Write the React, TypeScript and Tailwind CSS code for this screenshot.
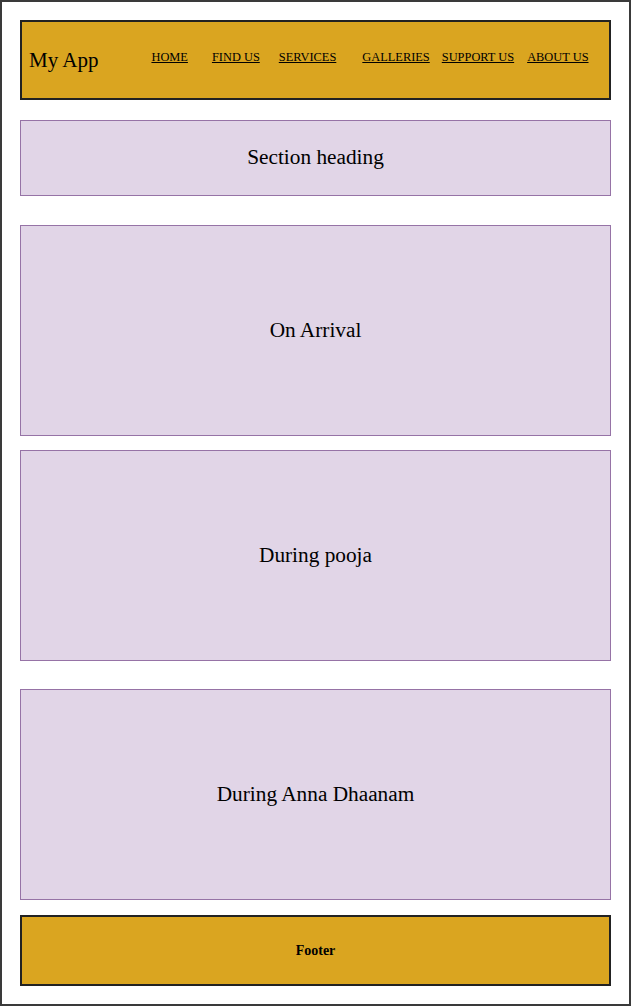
const serif = "font-['Liberation_Serif','Times_New_Roman',serif]";

function Box({ label, className }: { label: string; className: string }) {
  return (
    <div
      className={`flex items-center justify-center border border-[#9673a6] bg-[#e1d5e7] text-[21.3px] text-black ${className}`}
    >
      {label}
    </div>
  );
}

export default function App() {
  const links = [
    { name: "HOME", ml: "ml-0" },
    { name: "FIND US", ml: "ml-[24px]" },
    { name: "SERVICES", ml: "ml-[19px]" },
    { name: "GALLERIES", ml: "ml-[26px]" },
    { name: "SUPPORT US", ml: "ml-[12px]" },
    { name: "ABOUT US", ml: "ml-[13px]" },
  ];

  return (
    <div className={`${serif} h-[1006px] w-[631px] bg-white`}>
      <div className="flex h-full flex-col border-2 border-[#3a3a3a] px-[18px] pt-[18px]">
        {/* Header */}
        <header className="flex h-[80px] items-center border-2 border-[#222] bg-[#daa520] pl-[7px]">
          <span className="mt-[1px] text-[21px] text-black">My App</span>
          <nav className="mb-[5px] ml-[53px] flex">
            {links.map((l) => (
              <a key={l.name} className={`${l.ml} text-[12.4px] text-black underline`}>
                {l.name}
              </a>
            ))}
          </nav>
        </header>

        <Box label="Section heading" className="mt-[20px] h-[76px]" />
        <Box label="On Arrival" className="mt-[29px] h-[211px]" />
        <Box label="During pooja" className="mt-[14px] h-[211px]" />
        <Box label="During Anna Dhaanam" className="mt-[28px] h-[211px]" />

        {/* Footer */}
        <footer className="mt-[15px] flex h-[71px] items-center justify-center border-2 border-[#222] bg-[#daa520] text-[14px] font-bold text-black">
          Footer
        </footer>
      </div>
    </div>
  );
}
